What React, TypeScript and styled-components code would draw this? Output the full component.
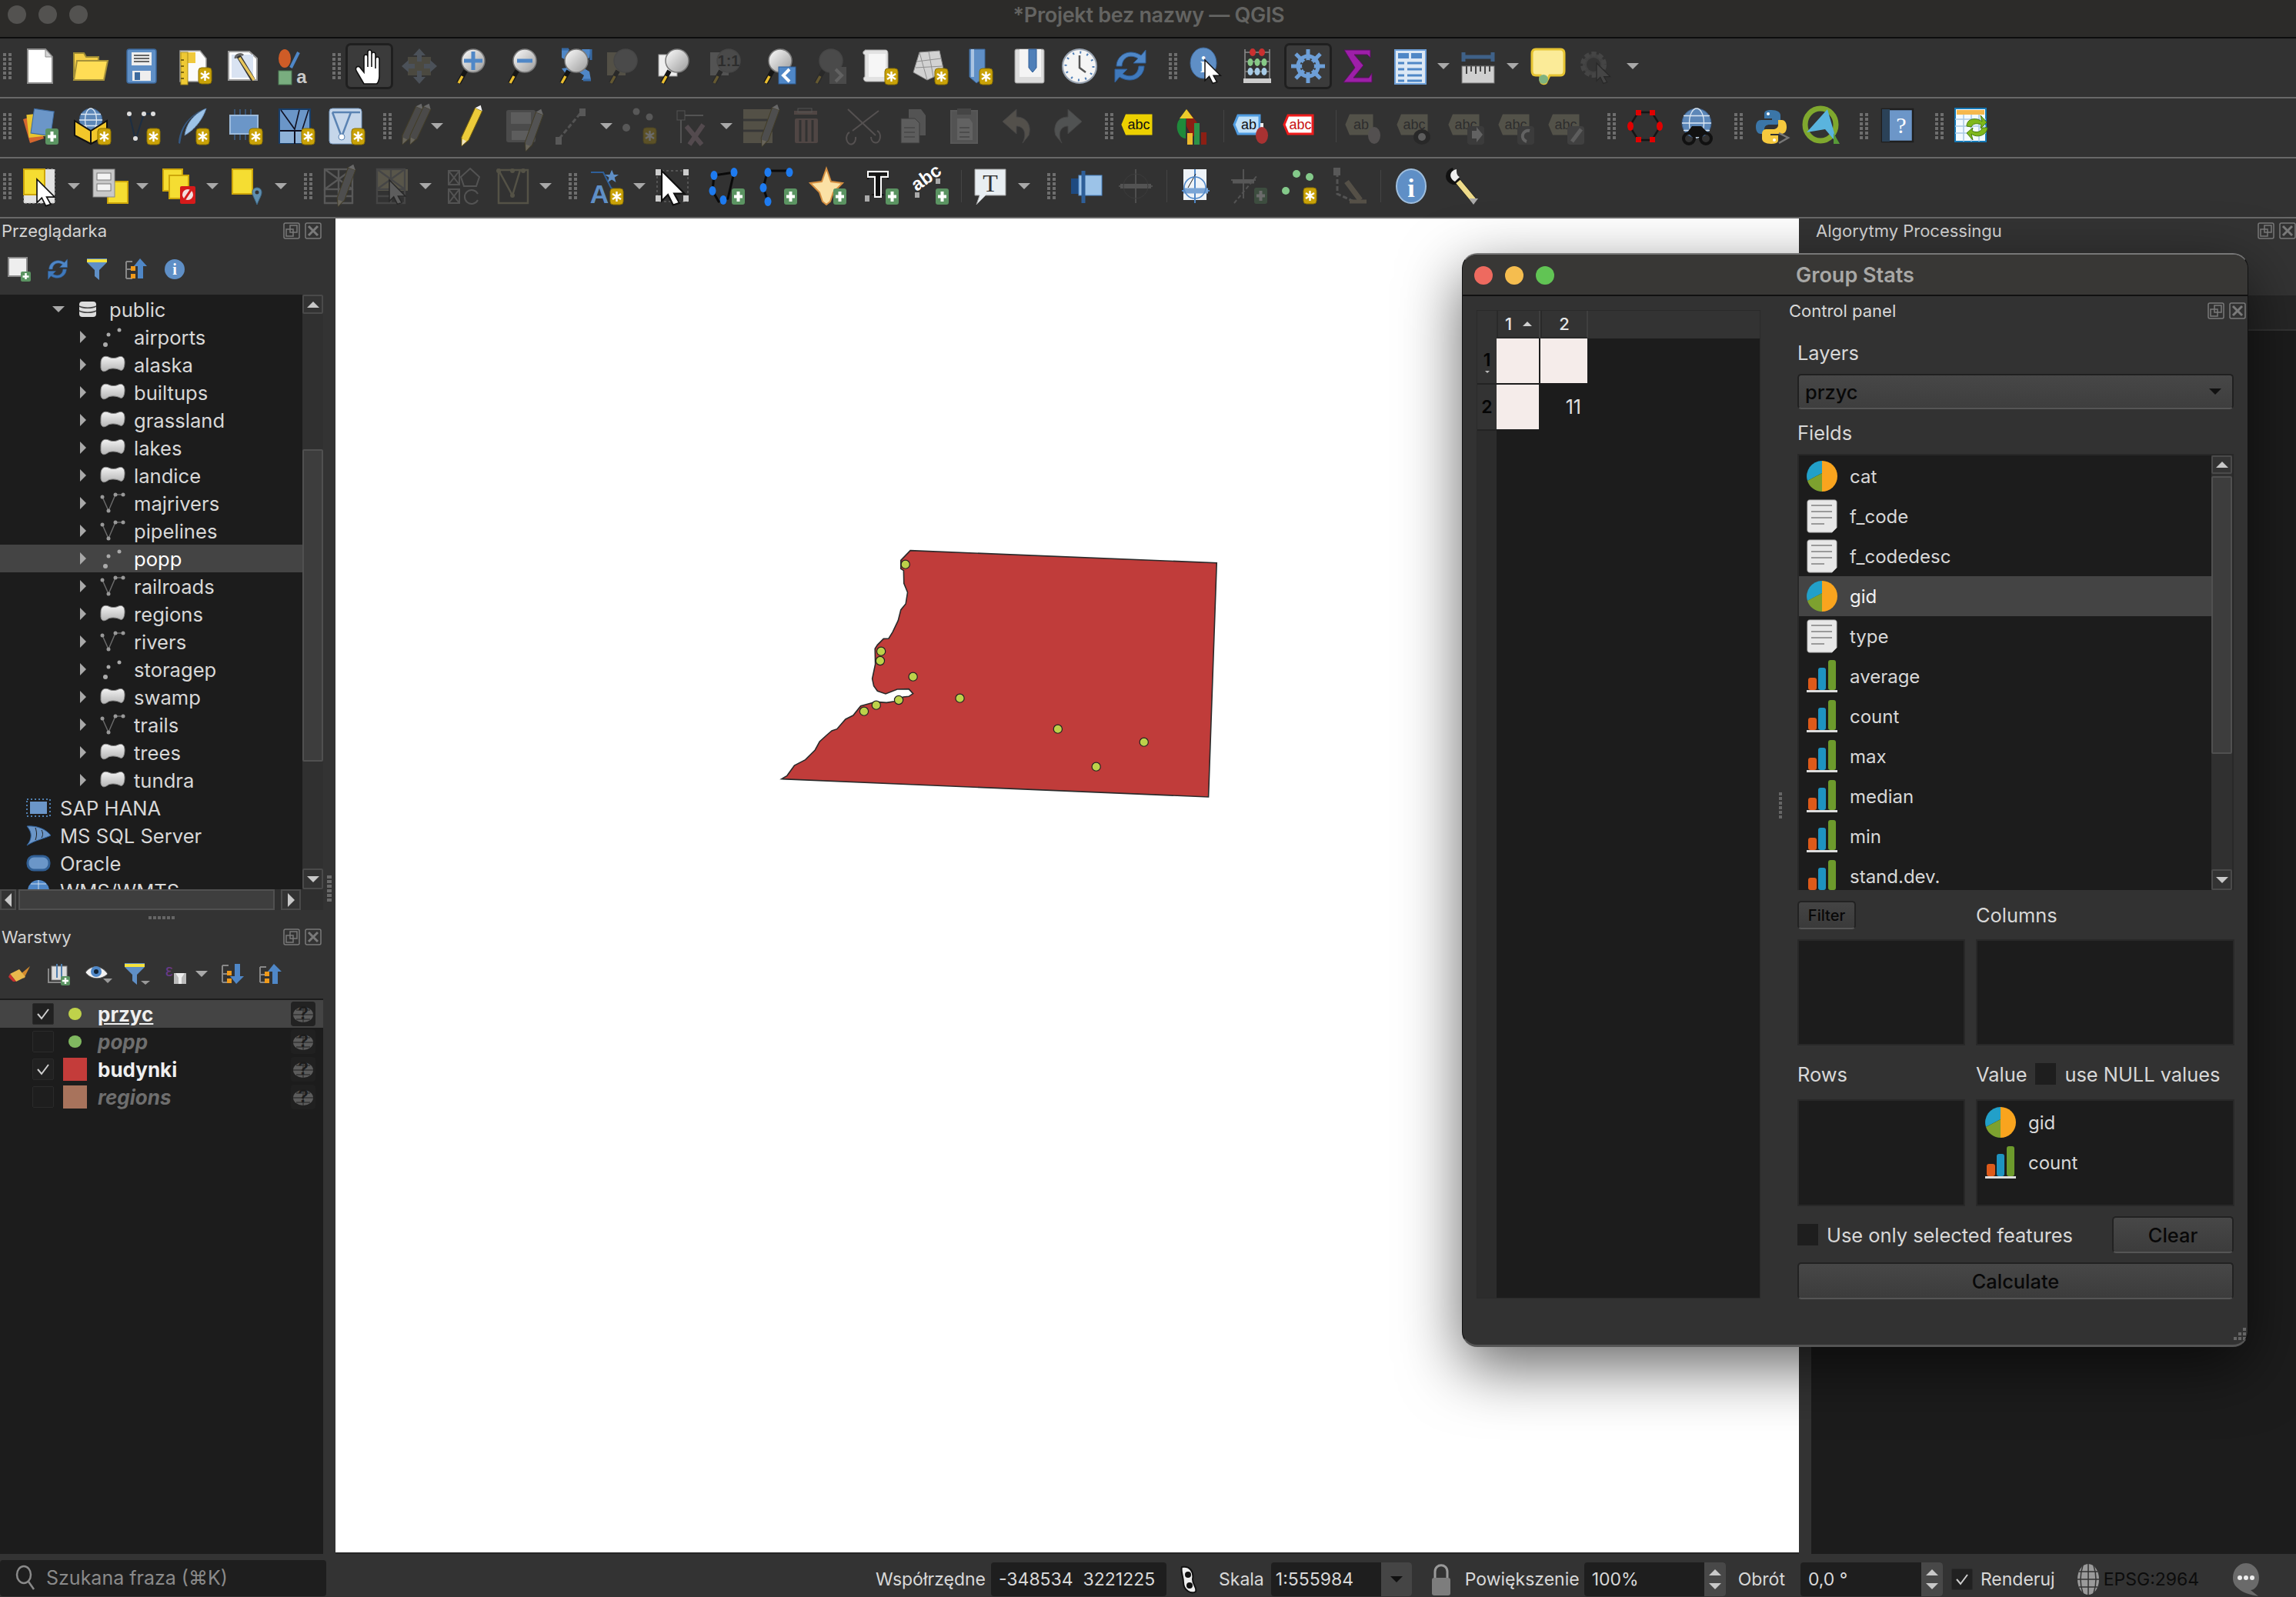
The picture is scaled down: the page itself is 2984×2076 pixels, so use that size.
import React, { ReactNode } from "react";
import styled, { createGlobalStyle } from "styled-components";

const GlobalStyle = createGlobalStyle`
  html, body { margin: 0; padding: 0; background: #333; }
  body { font-family: Inter, "Noto Sans", sans-serif; overflow: hidden; }
  * { box-sizing: border-box; }
`;

const Page = styled.div`
  position: relative;
  width: 2984px;
  height: 2076px;
  display: flex;
  flex-direction: column;
  background: #333;
  color: #d8d8d8;
  overflow: hidden;
`;

const TitleBar = styled.div`
  height: 50px;
  flex: none;
  display: grid;
  grid-template-columns: 1fr auto 1fr;
  align-items: center;
  padding: 0 8px 10px 10px;
  background: #2c2b29;
  border-bottom: 2px solid #0d0d0d;
`;
const Lights = styled.div`
  display: flex;
  gap: 16px;
`;
const Light = styled.span<{ $c: string }>`
  width: 24px;
  height: 24px;
  border-radius: 50%;
  background: ${(p) => p.$c};
`;
const WindowTitle = styled.div`
  font-size: 27px;
  font-weight: 600;
  color: #646462;
  letter-spacing: -0.3px;
`;

const Toolbar = styled.div`
  height: 78px;
  flex: none;
  display: flex;
  align-items: center;
  padding-bottom: 4px;
  background: #323232;
  border-bottom: 2px solid #686868;
`;
const Slot = styled.div<{ $ml: number; $w: number; $dim?: boolean; $active?: boolean }>`
  position: relative;
  flex: none;
  width: ${(p) => p.$w}px;
  height: 48px;
  margin-left: ${(p) => p.$ml}px;
  display: flex;
  align-items: center;
  justify-content: center;
  svg { opacity: ${(p) => (p.$dim ? 0.28 : 1)}; display: block; position: relative; overflow: visible; }
  ${(p) =>
    p.$active &&
    `&::before {
      content: "";
      position: absolute;
      inset: -6px -7px;
      background: #3b3b3b;
      border: 3px solid #1f1f1f;
      border-radius: 7px;
    }`}
`;
const Handle = styled.div`
  width: 11px;
  height: 34px;
  display: grid;
  grid-template-columns: 4px 4px;
  gap: 2px 3px;
  span { height: 4px; background: #6e6e6e; }
`;
const Sep = styled.div`
  width: 1px;
  height: 42px;
  background: #444;
`;
const Tri = styled.span<{ $dir?: "down" | "up" | "left" | "right"; $s?: number; $c?: string }>`
  display: block;
  flex: none;
  width: 0;
  height: 0;
  ${(p) => {
    const s = p.$s ?? 8;
    const c = p.$c ?? "#a9a9a9";
    const d = p.$dir ?? "down";
    if (d === "down") return `border-left:${s}px solid transparent;border-right:${s}px solid transparent;border-top:${s}px solid ${c};`;
    if (d === "up") return `border-left:${s}px solid transparent;border-right:${s}px solid transparent;border-bottom:${s}px solid ${c};`;
    if (d === "left") return `border-top:${s}px solid transparent;border-bottom:${s}px solid transparent;border-right:${s}px solid ${c};`;
    return `border-top:${s}px solid transparent;border-bottom:${s}px solid transparent;border-left:${s}px solid ${c};`;
  }}
`;

const Main = styled.div`
  flex: 1;
  min-height: 0;
  display: flex;
`;
const LeftDock = styled.div`
  width: 436px;
  flex: none;
  display: flex;
`;
const LeftPanels = styled.div`
  width: 420px;
  flex: none;
  display: flex;
  flex-direction: column;
`;
const SideSash = styled.div`
  width: 16px;
  height: 34px;
  margin-top: 854px;
  display: flex;
  flex-direction: column;
  align-items: center;
  gap: 2px;
  span { width: 6px; height: 4px; background: #6a6a6a; }
`;
const DockTitle = styled.div`
  height: 32px;
  flex: none;
  display: flex;
  align-items: center;
  justify-content: space-between;
  padding: 0 2px 0 2px;
  font-size: 22px;
  color: #d4d4d4;
`;
const DockBtns = styled.div`
  display: flex;
  gap: 6px;
  margin-right: 0;
`;
const DockBtn = styled.svg`
  display: block;
`;
const PanelBar = styled.div<{ $h: number }>`
  height: ${(p) => p.$h}px;
  flex: none;
  display: flex;
  align-items: center;
`;
const PanelIcon = styled.div<{ $ml: number }>`
  flex: none;
  margin-left: ${(p) => p.$ml}px;
  display: flex;
  align-items: center;
  svg { display: block; overflow: visible; }
`;
const TreeWrap = styled.div`
  height: 773px;
  flex: none;
  display: flex;
  background: #1c1c1c;
`;
const TreeView = styled.div`
  flex: 1;
  min-width: 0;
  padding-top: 1px;
  overflow: hidden;
`;
const TreeRow = styled.div<{ $pad: number; $sel?: boolean }>`
  height: 36px;
  display: flex;
  align-items: center;
  padding-left: ${(p) => p.$pad}px;
  background: ${(p) => (p.$sel ? "#444" : "transparent")};
  color: ${(p) => (p.$sel ? "#fff" : "#d8d8d8")};
  font-size: 25.6px;
  white-space: nowrap;
`;
const Twisty = styled.div`
  width: 16px;
  display: flex;
  justify-content: center;
  flex: none;
`;
const RowIcon = styled.div<{ $ml: number; $w: number }>`
  flex: none;
  width: ${(p) => p.$w}px;
  margin-left: ${(p) => p.$ml}px;
  display: flex;
  svg { display: block; overflow: visible; }
`;
const RowLabel = styled.span<{ $ml: number }>`
  margin-left: ${(p) => p.$ml}px;
`;

const VBar = styled.div<{ $w: number }>`
  width: ${(p) => p.$w}px;
  flex: none;
  display: flex;
  flex-direction: column;
  background: #303030;
`;
const ScrollBtn = styled.div<{ $h: number }>`
  height: ${(p) => p.$h}px;
  flex: none;
  display: flex;
  align-items: center;
  justify-content: center;
  background: #333;
  border: 2px solid #4a4a4a;
  border-radius: 2px;
`;
const VThumb = styled.div<{ $mt: number; $h: number }>`
  margin-top: ${(p) => p.$mt}px;
  height: ${(p) => p.$h}px;
  flex: none;
  background: #3d3d3d;
  border: 2px solid #505050;
  border-radius: 2px;
`;
const Grow = styled.div`
  flex: 1;
`;
const HBar = styled.div`
  height: 27px;
  flex: none;
  display: flex;
  align-items: stretch;
  background: #2f2f2f;
`;
const HBtn = styled.div<{ $w: number }>`
  width: ${(p) => p.$w}px;
  flex: none;
  display: flex;
  align-items: center;
  justify-content: center;
  background: #333;
  border: 2px solid #4a4a4a;
`;
const HThumb = styled.div`
  flex: none;
  width: 333px;
  margin: 0 8px 0 3px;
  background: #3e3e3e;
  border: 2px solid #505050;
`;
const Splitter = styled.div`
  height: 19px;
  flex: none;
  display: flex;
  justify-content: center;
  align-items: center;
  gap: 2px;
  span { width: 4px; height: 4px; background: #666; }
`;
const LayerTree = styled.div`
  flex: 1;
  min-height: 0;
  background: #1c1c1c;
  padding-top: 2px;
`;
const LayerRow = styled.div<{ $sel?: boolean }>`
  height: 36px;
  display: flex;
  align-items: center;
  padding: 0 10px 0 42px;
  background: ${(p) => (p.$sel ? "#444" : "transparent")};
`;
const Check = styled.div<{ $on?: boolean }>`
  width: 28px;
  height: 28px;
  flex: none;
  display: flex;
  align-items: center;
  justify-content: center;
  background: ${(p) => (p.$on ? "#212121" : "#1e1e1e")};
  border: 1px solid #2a2a2a;
  border-radius: 2px;
`;
const Symbol = styled.div`
  width: 32px;
  height: 32px;
  margin-left: 11px;
  flex: none;
  display: flex;
  align-items: center;
  justify-content: center;
`;
const Swatch = styled.span<{ $c: string }>`
  width: 31px;
  height: 30px;
  background: ${(p) => p.$c};
`;
const Marker = styled.span<{ $c: string }>`
  width: 17px;
  height: 16px;
  border-radius: 50%;
  background: ${(p) => p.$c};
`;
const LayerName = styled.span<{ $off?: boolean; $cur?: boolean }>`
  margin-left: 14px;
  font-size: 26px;
  font-weight: 700;
  font-style: ${(p) => (p.$off ? "italic" : "normal")};
  color: ${(p) => (p.$off ? "#6e6e6e" : "#efefef")};
  text-decoration: ${(p) => (p.$cur ? "underline" : "none")};
`;
const CrsBadge = styled.div<{ $sel?: boolean }>`
  margin-left: auto;
  width: 32px;
  height: 32px;
  display: flex;
  align-items: center;
  justify-content: center;
  background: ${(p) => (p.$sel ? "#222" : "#202020")};
  border-radius: 4px;
`;

const MapCanvas = styled.div`
  width: 1902px;
  flex: none;
  height: 1736px;
  background: #fff;
  border-bottom: 2px solid #262626;
  svg { display: block; }
`;

const RightDock = styled.div`
  flex: 1;
  min-width: 0;
  display: flex;
  flex-direction: column;
`;
const RightTitle = styled.div`
  height: 32px;
  flex: none;
  display: flex;
  align-items: center;
  justify-content: space-between;
  padding-left: 22px;
  font-size: 22px;
  color: #d4d4d4;
`;
const RightBar = styled.div`
  height: 68px;
  flex: none;
`;
const RightSearch = styled.div`
  height: 44px;
  flex: none;
  margin-left: 16px;
  background: #262626;
`;
const RightTree = styled.div`
  flex: 1;
  margin-left: 16px;
  margin-top: 2px;
  background: #1c1c1c;
`;

const StatusBar = styled.div`
  height: 56px;
  flex: none;
  display: flex;
  align-items: center;
  padding-top: 10px;
  background: #333;
  font-size: 23px;
  color: #d8d8d8;
  white-space: nowrap;
`;
const SearchBox = styled.div`
  width: 424px;
  height: 47px;
  flex: none;
  margin-top: -4px;
  display: flex;
  align-items: center;
  gap: 14px;
  padding-left: 20px;
  background: #1e1e1e;
  border-radius: 4px;
  color: #8a8a8a;
  font-size: 25px;
  svg { display: block; }
`;
const StatusLabel = styled.span<{ $ml: number }>`
  margin-left: ${(p) => p.$ml}px;
  flex: none;
`;
const StatusField = styled.div<{ $ml: number; $w: number; $pl?: number }>`
  width: ${(p) => p.$w}px;
  margin-left: ${(p) => p.$ml}px;
  height: 44px;
  flex: none;
  display: flex;
  align-items: center;
  justify-content: space-between;
  padding-left: ${(p) => p.$pl ?? 10}px;
  background: #1e1e1e;
  border-radius: 4px;
  overflow: hidden;
`;
const Spin = styled.div`
  width: 28px;
  height: 100%;
  flex: none;
  display: flex;
  flex-direction: column;
  align-items: center;
  justify-content: center;
  gap: 10px;
  background: #484848;
`;
const DropSide = styled.div`
  width: 40px;
  height: 100%;
  flex: none;
  display: flex;
  align-items: center;
  justify-content: center;
  background: #454545;
`;
const StatusIcon = styled.div<{ $ml: number }>`
  margin-left: ${(p) => p.$ml}px;
  flex: none;
  display: flex;
  svg { display: block; }
`;
const EpsgText = styled.span`
  margin-left: 5px;
  color: #0c0c0c;
  flex: none;
`;

const Dialog = styled.div`
  position: absolute;
  left: 1900px;
  top: 329px;
  width: 1022px;
  height: 1422px;
  display: flex;
  flex-direction: column;
  background: #323232;
  border: 1px solid #111;
  border-top: 2px solid #777;
  border-bottom: 3px solid #555;
  border-radius: 20px;
  box-shadow: 0 26px 80px rgba(0, 0, 0, 0.6);
  overflow: hidden;
`;
const DialogTitle = styled.div`
  position: relative;
  height: 54px;
  flex: none;
  display: flex;
  align-items: center;
  justify-content: center;
  background: #383735;
  border-bottom: 2px solid #111;
  font-size: 27px;
  font-weight: 600;
  color: #a8a8a6;
`;
const DialogLights = styled.div`
  position: absolute;
  left: 15px;
  top: 15px;
  display: flex;
  gap: 16px;
`;
const DialogBody = styled.div`
  position: relative;
  flex: 1;
  display: flex;
  min-height: 0;
`;
const ResultTable = styled.div`
  width: 369px;
  height: 1285px;
  margin: 18px 0 0 18px;
  flex: none;
  display: flex;
  flex-direction: column;
  background: #1c1c1c;
  border: 1px solid #2a2a2a;
`;
const TableHead = styled.div`
  height: 36px;
  flex: none;
  display: flex;
  background: #333;
  color: #e6e6e6;
  font-size: 22px;
  font-weight: 500;
`;
const Corner = styled.div`
  width: 25px;
  flex: none;
`;
const ColHead = styled.div<{ $w: number }>`
  width: ${(p) => p.$w}px;
  flex: none;
  display: flex;
  align-items: center;
  justify-content: center;
  gap: 14px;
  border-left: 2px solid #2a2a2a;
  border-right: 2px solid #3f3f3f;
  border-bottom: 2px solid #282828;
`;
const TableBody = styled.div`
  flex: 1;
  display: flex;
  min-height: 0;
`;
const RowHeads = styled.div`
  width: 25px;
  flex: none;
  background: #2c2c2c;
  color: #050505;
  font-size: 23px;
  font-weight: 600;
`;
const RowHead = styled.div`
  height: 60px;
  display: flex;
  flex-direction: column;
  align-items: center;
  justify-content: center;
  border-bottom: 2px solid #232323;
  background: #333;
`;
const CellGrid = styled.div`
  display: grid;
  grid-template-columns: 55px 61px;
  grid-auto-rows: 58px;
  gap: 2px;
  align-content: start;
`;
const Cell = styled.div<{ $pink?: boolean }>`
  display: flex;
  align-items: center;
  justify-content: flex-end;
  padding-right: 8px;
  font-size: 25px;
  color: #e0e0e0;
  background: ${(p) => (p.$pink ? "#f5ecea" : "#1c1c1c")};
`;
const Control = styled.div`
  flex: 1;
  min-width: 0;
  display: flex;
  flex-direction: column;
  padding: 0 18px 0 48px;
  font-size: 25.4px;
  color: #d8d8d8;
`;
const ControlHead = styled.div`
  height: 38px;
  margin: 0 -16px 0 -11px;
  flex: none;
  display: flex;
  align-items: center;
  justify-content: space-between;
  font-size: 22px;
  white-space: nowrap;
`;
const FieldLabel = styled.div<{ $mt: number }>`
  height: 34px;
  margin-top: ${(p) => p.$mt}px;
  flex: none;
  display: flex;
  align-items: center;
`;
const Combo = styled.div`
  height: 46px;
  margin-top: 11px;
  flex: none;
  display: flex;
  align-items: center;
  justify-content: space-between;
  padding: 0 14px 0 8px;
  background: linear-gradient(#474747, #3e3e3e);
  border: 2px solid #202020;
  border-bottom-color: #555;
  border-radius: 5px;
  color: #080808;
  font-weight: 500;
`;
const FieldList = styled.div`
  height: 567px;
  margin-top: 11px;
  flex: none;
  display: flex;
  background: #1c1c1c;
  border: 2px solid #282828;
  border-bottom: none;
`;
const ListView = styled.div`
  flex: 1;
  min-width: 0;
  padding-top: 1px;
  overflow: hidden;
`;
const ListRow = styled.div<{ $sel?: boolean }>`
  height: 52px;
  display: flex;
  align-items: center;
  gap: 15px;
  padding-left: 9px;
  background: ${(p) => (p.$sel ? "#444" : "transparent")};
  color: ${(p) => (p.$sel ? "#f2f2f2" : "#d8d8d8")};
  font-size: 24px;
  svg { display: block; flex: none; }
`;
const DropGrid = styled.div<{ $mt: number; $h: number }>`
  display: grid;
  grid-template-columns: 218px 336px;
  column-gap: 14px;
  margin-top: ${(p) => p.$mt}px;
  height: ${(p) => p.$h}px;
  flex: none;
  align-items: center;
`;
const DropBox = styled.div`
  height: 100%;
  padding-top: 2px;
  background: #1c1c1c;
  border: 2px solid #282828;
`;
const SmallBtn = styled.div`
  width: 76px;
  height: 37px;
  display: flex;
  align-items: center;
  justify-content: center;
  background: linear-gradient(#444, #3a3a3a);
  border: 2px solid #222;
  border-bottom-color: #555;
  border-radius: 5px;
  color: #080808;
  font-size: 20px;
  font-weight: 500;
`;
const InlineCheck = styled.div`
  display: flex;
  align-items: center;
  gap: 11px;
`;
const BoxCheck = styled.span`
  width: 27px;
  height: 28px;
  flex: none;
  background: #1e1e1e;
`;
const OptionRow = styled.div`
  height: 48px;
  margin-top: 13px;
  flex: none;
  display: flex;
  align-items: center;
  justify-content: space-between;
`;
const DarkBtn = styled.div<{ $w?: number; $mt?: number }>`
  width: ${(p) => (p.$w ? `${p.$w}px` : "auto")};
  height: 48px;
  margin-top: ${(p) => p.$mt ?? 0}px;
  flex: none;
  display: flex;
  align-items: center;
  justify-content: center;
  background: linear-gradient(#474747, #3c3c3c);
  border: 2px solid #222;
  border-bottom-color: #555;
  border-radius: 5px;
  color: #080808;
  font-weight: 500;
`;
const MidGrip = styled.div`
  position: absolute;
  left: 411px;
  top: 645px;
  display: flex;
  flex-direction: column;
  gap: 2px;
  span { width: 4px; height: 4px; background: #666; }
`;
const CornerGrip = styled.svg`
  position: absolute;
  right: 0;
  bottom: 0;
  display: block;
`;

// ---- icon parts
const T = ({ x, y, s, c, w, f, children }: { x: number; y: number; s: number; c: string; w?: number; f?: string; children: ReactNode }) => (
  <text x={x} y={y} fontSize={s} fill={c} fontWeight={w ?? 400} fontFamily={f ?? "Liberation Sans, sans-serif"} textAnchor="middle">
    {children}
  </text>
);
const Star = ({ x = 31, y = 27 }: { x?: number; y?: number }) => (
  <g transform={`translate(${x} ${y})`}>
    <rect width="17" height="21" rx="4" fill="#c9a208" stroke="#8b7100" />
    <path d="M8.5 4v13M3 7l11 7M14 7L3 14" stroke="#fff" strokeWidth="2.4" />
  </g>
);
const Plus = ({ x = 31, y = 27 }: { x?: number; y?: number }) => (
  <g transform={`translate(${x} ${y})`}>
    <rect width="17" height="21" rx="3" fill="#5b9462" />
    <path d="M8.5 4v13M3 10.5h11" stroke="#fff" strokeWidth="4" />
  </g>
);
const Lens = ({ children, dark }: { children?: ReactNode; dark?: boolean }) => (
  <>
    <path d="M8 46L17 30" stroke="#151515" strokeWidth="6" />
    <path d="M8 46L13 37" stroke="#e9bd2f" strokeWidth="3.5" />
    <circle cx="27" cy="17" r="15" fill={dark ? "#8a8a8a" : "url(#lens)"} stroke="#7a7a7a" strokeWidth="1.5" />
    {children}
  </>
);
const Cursor = ({ x = 0, y = 0, s = 1, c = "#fff" }: { x?: number; y?: number; s?: number; c?: string }) => (
  <path
    transform={`translate(${x} ${y}) scale(${s})`}
    d="M0 0L22 22H12L17 31L11 33L6 23L0 29Z"
    fill={c}
    stroke="#111"
    strokeWidth="1.6"
  />
);
const Table3 = ({ x = 0, y = 0, c = "#bbb" }: { x?: number; y?: number; c?: string }) => (
  <g transform={`translate(${x} ${y})`} fill="none" stroke={c} strokeWidth="2.4">
    <rect x="0" y="0" width="36" height="26" />
    <path d="M0 0L36 26M36 0L0 26M18 0v26" />
    <path d="M0 26v18h36V26M0 35h36M18 26v18" />
  </g>
);
const Pencil = ({ x = 0, y = 0, r = 25, c = "#eccb3a" }: { x?: number; y?: number; r?: number; c?: string }) => (
  <g transform={`translate(${x} ${y}) rotate(${r})`}>
    <path d="M-5 -24H5V18L0 28L-5 18Z" fill={c} stroke="#6d5a10" />
    <path d="M-5 -24L0 -30L5 -24Z" fill="#f4f4f4" />
    <path d="M-3 20L0 28L3 20Z" fill="#f2e5c0" />
  </g>
);
const Globe = ({ cx = 24, cy = 18, r = 16 }: { cx?: number; cy?: number; r?: number }) => (
  <g>
    <circle cx={cx} cy={cy} r={r} fill="#5c87b8" stroke="#3a5c86" />
    <ellipse cx={cx} cy={cy} rx={r / 2} ry={r} fill="none" stroke="#dbe7f3" strokeWidth="1.3" />
    <path d={`M${cx - r} ${cy}H${cx + r}M${cx - r + 2} ${cy - r / 2}H${cx + r - 2}M${cx - r + 2} ${cy + r / 2}H${cx + r - 2}`} stroke="#dbe7f3" strokeWidth="1.3" />
  </g>
);
const AbcTag = ({ fill, stroke, text, c, w = 30 }: { fill: string; stroke: string; text: string; c: string; w?: number }) => (
  <>
    <path d={`M6 10H${w + 8}V34H6L1 22Z`} fill={fill} stroke={stroke} strokeWidth="3" />
    <T x={w / 2 + 7} y={28} s={18} c={c}>{text}</T>
  </>
);

const icons: Record<string, ReactNode> = {
  newDoc: <><path d="M8 2H31L40 12V46H8Z" fill="#fff" stroke="#8d8d8d" strokeWidth="2" /><path d="M31 2V12H40Z" fill="#d5d5d5" stroke="#8d8d8d" /></>,
  folder: <><path d="M2 7H15L18 12H34V38H2Z" fill="#f4cf48" stroke="#9c8a35" strokeWidth="2" /><path d="M6 17H46L41 42H2Z" fill="#ffdd55" stroke="#a5913a" strokeWidth="2" /></>,
  save: <><rect x="5" y="2" width="38" height="44" rx="3" fill="#5f8fc6" stroke="#3c689c" strokeWidth="1.5" /><rect x="11" y="6" width="26" height="17" fill="#eee" /><path d="M14 10H34M14 14H34M14 18H34" stroke="#666" strokeWidth="2" /><rect x="12" y="30" width="24" height="13" fill="#eee" /><rect x="15" y="32" width="7" height="10" fill="#3d6a9e" /></>,
  saveAs: <><path d="M8 4H34L42 14V44H8Z" fill="#fbfbfb" stroke="#999" strokeWidth="1.5" /><rect x="8" y="6" width="20" height="14" fill="#f0c93c" /><rect x="9" y="6" width="9" height="42" fill="#efc934" stroke="#a78b1b" /><path d="M9 16h4M9 24h4M9 32h4M9 40h4" stroke="#7d6711" strokeWidth="2" /><Star x={32} y={26} /></>,
  projProps: <><path d="M5 5H32L42 14V42H5Z" fill="#fff" stroke="#9a9a9a" strokeWidth="2" /><rect x="9" y="9" width="28" height="30" fill="#d9e3f2" /><path d="M17 9L37 42" stroke="#333" strokeWidth="6" /><path d="M19 13L38 42" stroke="#e8c65b" strokeWidth="3.5" /><path d="M14 14c0-5 7-7 10-4" fill="none" stroke="#666" strokeWidth="3" /></>,
  style: <><ellipse cx="12" cy="14" rx="8" ry="12" fill="#cf5c27" /><path d="M30 6L20 26" stroke="#4f87c7" strokeWidth="4" /><rect x="4" y="30" width="17" height="18" fill="#79ad7f" stroke="#4d7a55" /><T x={34} y={46} s={24} c="#c9c9c9" w={700}>a</T></>,
  hand: <path d="M17 47L7 30C5 25 10 22 13 27L17 32V12C17 8 22 8 22 12V25V6C22 2 27 2 27 6V25V9C27 5 32 5 32 9V27V15C32 11 37 11 37 15V37C37 42 35 47 33 47Z" fill="#fff" stroke="#111" strokeWidth="1.6" />,
  panSel: <><rect x="9" y="12" width="30" height="24" fill="#8c8566" /><path d="M24 1l8 9h-5v8h-6v-8h-5zM24 47l8-9h-5v-8h-6v8h-5zM1 24l9-8v5h8v6h-8v5zM47 24l-9-8v5h-8v6h8v5z" fill="#8ea2bd" /></>,
  zoomIn: <Lens><path d="M27 5v24M15 17h24" stroke="#4f87c7" strokeWidth="5" /></Lens>,
  zoomOut: <Lens><path d="M17 17h20" stroke="#4f87c7" strokeWidth="5" /></Lens>,
  zoomFull: <><path d="M8 2h10l-3 6 6 4-6 5-7-4zM46 2H34l3 6-6 4 6 5 7-4zM46 42H34l3-6-6-4 6-5 7 4z M8 27l7-1 5 4-6 5z" fill="#4f87c7" /><path d="M8 2h9M46 2v14M46 42H36" stroke="#376aa5" strokeWidth="3" /><Lens /></>,
  zoomLayer: <><rect x="3" y="6" width="24" height="30" fill="#a8a07a" /><Lens dark /></>,
  zoomSel: <><rect x="3" y="9" width="24" height="28" fill="#eee" stroke="#999" /><Lens /></>,
  oneToOne: <><rect x="3" y="6" width="24" height="30" fill="#aaa" /><Lens dark><T x={27} y={24} s={20} c="#222" w={700}>1:1</T></Lens></>,
  zoomLast: <><Lens /><rect x="25" y="25" width="22" height="22" fill="#4f87c7" stroke="#2e5f99" /><path d="M39 28L31 36L39 44" stroke="#fff" strokeWidth="4" fill="none" /></>,
  zoomNext: <><Lens dark /><rect x="25" y="25" width="22" height="22" fill="#888" /><path d="M33 28L41 36L33 44" stroke="#ddd" strokeWidth="4" fill="none" /></>,
  newMap: <><path d="M6 4C3 4 3 9 6 9V38C3 38 4 44 8 44H36V8C36 3 34 3 32 3H6Z" fill="#e2e2e2" stroke="#aaa" /><rect x="11" y="8" width="22" height="30" fill="#f6f6f6" /><Star x={32} y={27} /></>,
  map3d: <><path d="M12 6L38 4L44 32L22 42L4 32Z" fill="#d2d2d2" stroke="#8b8b8b" /><path d="M12 6L22 42M24 5L30 38M8 18L40 14M7 26L42 24" stroke="#8f8f8f" /><Star x={32} y={27} /></>,
  newBook: <><path d="M12 2H32V38L21 46L12 38Z" fill="#5f8fc6" stroke="#3c689c" /><rect x="14" y="2" width="4" height="36" fill="#aac4e2" /><Star x={25} y={27} /></>,
  showBook: <><rect x="6" y="2" width="38" height="44" rx="2" fill="#dcdcdc" stroke="#999" /><rect x="12" y="2" width="28" height="36" fill="#f4f4f4" /><path d="M24 2H34V26L29 32L24 26Z" fill="#4f7fb8" stroke="#2e5f99" /></>,
  clock: <><circle cx="24" cy="24" r="22" fill="#f5f5f5" stroke="#9aa5b3" strokeWidth="2" /><circle cx="24" cy="24" r="18" fill="none" stroke="#4f7fb8" strokeWidth="3" strokeDasharray="2 7.4" /><path d="M24 10V26L32 32" stroke="#555" strokeWidth="2.5" fill="none" /></>,
  refresh: <><path d="M6 24C6 10 22 0 38 10L44 3V20H28L34 14C24 8 14 12 13 24Z" fill="#4f87c7" stroke="#2e5f99" /><path d="M42 24C42 38 26 48 10 38L4 45V28H20L14 34C24 40 34 36 35 24Z" fill="#3f79bc" stroke="#2e5f99" /></>,
  identify: <><ellipse cx="22" cy="20" rx="17" ry="20" fill="#5f8fc6" stroke="#3c689c" /><T x={22} y={32} s={30} c="#fff" w={700} f="Liberation Serif, serif">i</T><Cursor x={24} y={16} s={0.92} /></>,
  abacus: <><path d="M8 2V44M40 2V44" stroke="#777" strokeWidth="2" /><rect x="6" y="40" width="36" height="6" fill="#ccc" /><path d="M8 6H40M8 18H40M8 31H40" stroke="#888" strokeWidth="1.5" /><ellipse cx="18" cy="6" rx="4" ry="5" fill="#c93030" /><ellipse cx="30" cy="6" rx="4" ry="5" fill="#c93030" /><ellipse cx="15" cy="19" rx="3.5" ry="5" fill="#86c986" /><ellipse cx="24" cy="19" rx="3.5" ry="5" fill="#86c986" /><ellipse cx="33" cy="19" rx="3.5" ry="5" fill="#86c986" /><ellipse cx="15" cy="31" rx="3.5" ry="5" fill="#a7cbe6" /><ellipse cx="24" cy="31" rx="3.5" ry="5" fill="#a7cbe6" /><ellipse cx="33" cy="31" rx="3.5" ry="5" fill="#a7cbe6" /></>,
  gear: <><path d="M24 2V46M2 24H46M8 8L40 40M40 8L8 40" stroke="#6d9fd8" strokeWidth="5" /><circle cx="24" cy="24" r="8" fill="#3b3b3b" /><circle cx="24" cy="24" r="13" fill="none" stroke="#6d9fd8" strokeWidth="5" /></>,
  sigma: <path d="M6 3H40V13L36 9H19L31 23L18 39H38L42 33V45H5L20 26Z" fill="#9d1fa8" stroke="#59105f" />,
  table: <><rect x="5" y="3" width="40" height="44" fill="#dce8f5" stroke="#6d9fd8" strokeWidth="2" /><rect x="9" y="7" width="14" height="7" fill="#4f87c7" /><rect x="26" y="7" width="14" height="7" fill="#4f87c7" /><path d="M9 20h8M9 28h8M9 36h8M9 43h8M21 20h19M21 28h19M21 36h19M21 43h19" stroke="#4f87c7" strokeWidth="3" /></>,
  measure: <><path d="M4 6V18M42 6V18M4 12H42" stroke="#3f6188" strokeWidth="5" /><rect x="2" y="24" width="42" height="22" fill="#cfcfcf" stroke="#777" /><path d="M8 24v10M14 24v7M20 24v10M26 24v7M32 24v10M38 24v7" stroke="#444" strokeWidth="2" /></>,
  tip: <><path d="M8 2H40C43 2 45 4 45 8V30C45 34 43 36 40 36H26L22 44C22 48 14 48 14 42V36H8C5 36 3 34 3 30V8C3 4 5 2 8 2Z" fill="#fbeb98" stroke="#e6c432" strokeWidth="3" /><circle cx="18" cy="41" r="6" fill="#7fb37f" /></>,
  action: <><circle cx="20" cy="22" r="14" fill="#6a6a6a" stroke="#777" strokeWidth="6" strokeDasharray="6 3" /><circle cx="20" cy="22" r="9" fill="#3a3a3a" /><Cursor x={24} y={20} s={0.8} c="#777" /></>,
  layerMgr: <><path d="M3 15L20 10L30 40L12 46Z" fill="#d4672f" /><rect x="9" y="8" width="22" height="30" fill="#e9c52e" transform="rotate(-6 20 24)" /><rect x="15" y="3" width="26" height="32" fill="#6b96c8" stroke="#3c689c" transform="rotate(8 28 20)" /><Plus x={32} y={27} /></>,
  gpkg: <><Globe cx={24} cy={16} r={15} /><path d="M3 17L24 30L45 17V36L24 47L3 36Z" fill="#f2c72a" stroke="#111" strokeWidth="2" /><path d="M24 30V47" stroke="#111" strokeWidth="2" /><Star x={33} y={27} /></>,
  newLine: <><path d="M7 8L15 42L26 8H38" fill="none" stroke="#1d2e42" strokeWidth="2" /><circle cx="7" cy="8" r="3" fill="#ddd" /><circle cx="26" cy="8" r="3" fill="#ddd" /><circle cx="38" cy="8" r="3" fill="#ddd" /><circle cx="15" cy="40" r="3" fill="#ddd" /><Star x={30} y={27} /></>,
  quill: <><path d="M42 1C28 6 14 18 10 36L8 47L6 46C6 30 18 8 42 1Z" fill="#365a85" /><path d="M42 1C38 14 28 28 14 36C16 20 26 8 42 1Z" fill="#9dc3e8" stroke="#5c86b4" strokeDasharray="3 1" /><Star x={29} y={27} /></>,
  chip: <><path d="M12 2v40M19 2v40M26 2v40M33 2v40" stroke="#3b5f88" strokeWidth="1.5" /><rect x="6" y="10" width="36" height="24" fill="#6b96c8" stroke="#9dbbdc" strokeWidth="2" /><Star x={31} y={27} /></>,
  mesh: <><rect x="3" y="1" width="42" height="46" fill="#173e6a" /><rect x="5" y="3" width="38" height="26" fill="#6b96c8" /><path d="M6 3L24 28L30 3M34 28L42 3" stroke="#112" strokeWidth="1.6" fill="none" /><path d="M5 30H43M24 30V47M5 38H43" stroke="#112" strokeWidth="2" /><rect x="5" y="31" width="18" height="15" fill="#8fb2d8" /><rect x="25" y="31" width="12" height="15" fill="#8fb2d8" /><Star x={33} y={27} /></>,
  virtual: <><rect x="4" y="1" width="42" height="46" rx="4" fill="#c5d6ea" stroke="#7b9cc2" /><path d="M8 6L20 38L32 6M8 6H44" stroke="#5a83b3" strokeWidth="2.5" fill="none" /><circle cx="20" cy="38" r="4" fill="#fff" stroke="#5a83b3" /><Star x={33} y={27} /></>,
  pencils: <><Pencil x={14} y={22} c="#8c8a84" /><Pencil x={24} y={22} c="#8c8a84" /></>,
  pencil: <Pencil x={24} y={24} c="#eccb3a" />,
  saveEdits: <><rect x="3" y="3" width="38" height="42" rx="3" fill="#8b8b8b" /><rect x="9" y="6" width="26" height="15" fill="#ccc" /><rect x="10" y="30" width="22" height="12" fill="#ccc" /><Pencil x={38} y={30} r={20} c="#aaa" /></>,
  nodeLine: <><path d="M8 40L38 4" stroke="#aaa" strokeWidth="3" strokeDasharray="6 3" /><rect x="3" y="38" width="8" height="10" fill="#bbb" /><rect x="34" y="1" width="8" height="10" fill="#bbb" /></>,
  dots: <><circle cx="6" cy="26" r="5" fill="#bbb" /><circle cx="19" cy="5" r="4.5" fill="#bbb" /><circle cx="36" cy="12" r="4.5" fill="#bbb" /><Star x={28} y={26} /></>,
  hammer: <><rect x="2" y="4" width="10" height="12" fill="none" stroke="#aaa" /><path d="M12 10H36M7 16V46" stroke="#aaa" strokeWidth="2" /><path d="M18 48L36 22M14 24L34 48" stroke="#a89" strokeWidth="6" /></>,
  tablePen: <><rect x="2" y="2" width="38" height="44" fill="#a8a07a" /><path d="M2 16H40M2 30H40" stroke="#444" strokeWidth="3" /><Pencil x={36} y={24} r={20} c="#999" /></>,
  trash: <><rect x="2" y="4" width="30" height="5" fill="#a07a72" /><rect x="7" y="1" width="18" height="5" fill="none" stroke="#aaa" /><rect x="3" y="14" width="30" height="32" rx="2" fill="#a07a72" /><path d="M10 16V44M18 16V44M26 16V44" stroke="#333" strokeWidth="3" /></>,
  scissors: <path d="M4 2L40 36M44 4L10 30M6 32a6 8 0 1 0 8 6M42 30a6 8 0 1 1-8 8" fill="none" stroke="#b0a0a0" strokeWidth="2" />,
  copy: <><path d="M18 2H34L40 10V36H18Z" fill="#aaa" /><path d="M8 14H26L32 20V46H8Z" fill="#ccc" stroke="#555" /><path d="M12 26H26M12 32H26M12 38H26" stroke="#555" /></>,
  paste: <><rect x="6" y="4" width="34" height="42" fill="#aaa" stroke="#bbb" strokeWidth="2" /><rect x="14" y="1" width="18" height="8" fill="#777" /><path d="M14 14H30L34 20V42H14Z" fill="#ddd" /><path d="M17 26H30M17 32H30M17 38H30" stroke="#444" /></>,
  undo: <path d="M4 18L22 2V12C36 12 42 24 38 36L30 46C36 34 32 24 22 24V34Z" fill="#a89e8e" stroke="#777" transform="translate(2 0)" />,
  redo: <path d="M44 18L26 2V12C12 12 6 24 10 36L18 46C12 34 16 24 26 24V34Z" fill="#9fa5a5" stroke="#777" />,
  abcY: <AbcTag fill="#ecd000" stroke="#ecd000" text="abc" c="#111" />,
  pie: <><path d="M15 2L4 18C0 28 6 40 14 40V24Z" fill="#1f8a3b" /><path d="M15 2L28 18C32 26 28 36 22 38L15 24Z" fill="#8c1f14" /><path d="M15 2L6 14H24Z" fill="#eccb2a" /><rect x="16" y="33" width="7" height="15" fill="#ecb92c" /><rect x="25" y="20" width="7" height="28" fill="#2d9248" /><rect x="34" y="32" width="7" height="16" fill="#8c1f14" /></>,
  abBlue: <><AbcTag fill="#bfe0f9" stroke="#4f9be0" text="ab" c="#111" w={26} /><rect x="35" y="20" width="4" height="14" fill="#eee" /><ellipse cx="37" cy="36" rx="8" ry="11" fill="#a83232" /></>,
  abcR: <AbcTag fill="#fff" stroke="#ee1c1c" text="abc" c="#c81212" />,
  abDim: <><AbcTag fill="#aaa486" stroke="#aaa486" text="ab" c="#222" w={26} /><ellipse cx="37" cy="36" rx="8" ry="11" fill="#a89e9e" /></>,
  abcEye: <><AbcTag fill="#aaa486" stroke="#aaa486" text="abc" c="#222" /><ellipse cx="32" cy="38" rx="11" ry="10" fill="#111" /><circle cx="32" cy="38" r="5" fill="#ccc" /></>,
  abcArrow: <><AbcTag fill="#aaa486" stroke="#aaa486" text="abc" c="#222" /><rect x="24" y="24" width="22" height="24" rx="4" fill="#555" /><path d="M30 30H36V25L44 35L36 45V40H30Z" fill="#ddd" /></>,
  abcRot: <><AbcTag fill="#aaa486" stroke="#aaa486" text="abc" c="#222" /><rect x="24" y="24" width="22" height="24" rx="4" fill="#555" /><path d="M40 30a7 7 0 1 0 -4 14" fill="none" stroke="#ddd" strokeWidth="4" /></>,
  abcPen: <><AbcTag fill="#aaa486" stroke="#aaa486" text="abc" c="#222" /><rect x="24" y="24" width="22" height="24" rx="4" fill="#666" /><path d="M42 28L30 44" stroke="#ccc" strokeWidth="5" /></>,
  redHex: <><path d="M15 6H33L44 24L33 42H15L4 24Z" fill="none" stroke="#151515" strokeWidth="2.5" /><rect x="12" y="3" width="7" height="7" fill="#e00000" /><rect x="30" y="3" width="7" height="7" fill="#e00000" /><rect x="12" y="38" width="7" height="7" fill="#e00000" /><rect x="30" y="38" width="7" height="7" fill="#e00000" /><ellipse cx="5" cy="24" rx="4" ry="6" fill="#e00000" /><ellipse cx="43" cy="24" rx="4" ry="6" fill="#e00000" /></>,
  globeBino: <><Globe cx={24} cy={20} r={19} /><circle cx="14" cy="40" r="7" fill="none" stroke="#111" strokeWidth="4" /><circle cx="36" cy="40" r="7" fill="none" stroke="#111" strokeWidth="4" /><path d="M12 32L18 24H30L38 32L30 38H18Z" fill="#111" /></>,
  python: <><path d="M24 3C14 3 15 7 15 10V14H25V16H11C6 16 4 20 4 25C4 31 7 34 10 34H15V28C15 24 18 22 22 22H31C34 22 36 19 36 16V10C36 6 32 3 24 3Z" fill="#3b76a8" /><circle cx="20" cy="8" r="2" fill="#fff" /><path d="M24 47C34 47 33 43 33 40V36H23V34H37C42 34 44 30 44 25C44 19 41 16 38 16H33V22C33 26 30 28 26 28H17C14 28 12 31 12 34V40C12 44 16 47 24 47Z" fill="#f5c93e" /><circle cx="28" cy="42" r="2" fill="#fff" /><path d="M34 33L46 39L34 46" fill="none" stroke="#777" strokeWidth="2.5" /></>,
  qgis: <><ellipse cx="23" cy="22" rx="20" ry="21" fill="none" stroke="#7fa82e" strokeWidth="7" /><path d="M32 2L5 32L29 28L45 47Z" fill="#5ab4de" /><path d="M40 33L48 47H40Z" fill="#589a38" /></>,
  help: <><rect x="5" y="2" width="40" height="42" fill="#6c96c8" stroke="#1f1f1f" strokeWidth="2.5" /><rect x="5" y="2" width="10" height="42" fill="#2b4258" /><T x={30} y={33} s={30} c="#fff" f="Liberation Serif, serif">?</T></>,
  tableSync: <><rect x="3" y="1" width="40" height="43" fill="#f3fafe" stroke="#1578b5" strokeWidth="2" /><rect x="5" y="3" width="36" height="6" fill="#f5b84d" /><path d="M3 15H43M3 24H43M3 33H43M14 9V44M24 9V44M34 9V44" stroke="#a9c9e3" strokeWidth="1.5" /><path d="M18 24C18 14 30 12 38 18L36 10L44 19L36 27L37 22C32 20 26 20 24 25Z" fill="#7fb81c" stroke="#467c0e" /><path d="M45 26C44 36 32 40 24 34L26 42L18 33L26 26L25 30C30 33 37 32 38 26Z" fill="#7fb81c" stroke="#467c0e" /></>,
  selRect: <><rect x="4" y="2" width="40" height="44" fill="#e2e2e2" stroke="#bbb" strokeDasharray="3 2" /><rect x="4" y="2" width="27" height="33" fill="#f5dd32" stroke="#cda60a" strokeWidth="2" /><Cursor x={21} y={15} s={1.05} /></>,
  attrSel: <><rect x="21" y="18" width="26" height="28" fill="#f5dd32" stroke="#cda60a" strokeWidth="2" /><rect x="2" y="2" width="28" height="36" fill="#c8c8c8" stroke="#8a8a8a" /><rect x="7" y="7" width="18" height="9" fill="#f3f3f3" stroke="#777" /><rect x="7" y="21" width="18" height="9" fill="#f3f3f3" stroke="#777" /></>,
  desel: <><rect x="3" y="2" width="25" height="28" fill="#f5dd32" stroke="#cda60a" strokeWidth="2" /><rect x="11" y="10" width="25" height="30" fill="#f5dd32" stroke="#cda60a" strokeWidth="2" /><rect x="25" y="24" width="20" height="23" rx="2" fill="#d61a1a" /><circle cx="35" cy="35" r="7" fill="#f3dede" /><path d="M31 41L39 29" stroke="#d61a1a" strokeWidth="3" /></>,
  selPin: <><rect x="4" y="2" width="26" height="32" fill="#f5dd32" stroke="#cda60a" strokeWidth="2" /><path d="M36 48C32 38 30 36 30 32C30 24 42 24 42 32C42 36 40 38 36 48Z" fill="#5f8fb0" stroke="#3e6a8a" /><circle cx="36" cy="32" r="2.5" fill="#333" /></>,
  dimEdit: <><Table3 x={3} y={2} /><Pencil x={30} y={24} r={20} c="#999" /></>,
  dimSel: <><rect x="4" y="2" width="40" height="28" fill="#bdb488" /><Table3 x={4} y={2} c="#777" /><Cursor x={20} y={16} s={0.95} c="#ccc" /></>,
  dimShapes: <><rect x="4" y="4" width="14" height="18" fill="none" stroke="#aaa" strokeWidth="2" /><path d="M4 4L18 22M18 4L4 22M32 1L44 12L40 24H24L20 12Z" fill="none" stroke="#aaa" strokeWidth="2" /><rect x="4" y="28" width="14" height="18" fill="none" stroke="#aaa" strokeWidth="2" /><path d="M4 28L18 46M18 28L4 46M42 34a9 9 0 1 0 0 8" fill="none" stroke="#aaa" strokeWidth="2" /></>,
  dimVert: <><path d="M6 3V46H44V3H6L24 36L34 3" fill="none" stroke="#ada47c" strokeWidth="2.5" /><circle cx="6" cy="4" r="3" fill="#ada47c" /><circle cx="24" cy="4" r="3" fill="#ada47c" /><circle cx="38" cy="4" r="3" fill="#ada47c" /><circle cx="24" cy="36" r="3" fill="#ada47c" /></>,
  labelA: <><path d="M4 6H20L30 26L40 32" fill="none" stroke="#2e5f99" strokeWidth="2" /><path d="M39 2l3 7h7l-6 4 2 7-6-4-6 4 2-7-6-4h7z" fill="#5f8fc6" transform="translate(-4 1) scale(.9)" /><T x={15} y={46} s={34} c="#5f8fc6" w={700}>A</T><Star x={29} y={27} /></>,
  cursorDots: <><path d="M4 4H44V44H4Z" fill="none" stroke="#777" strokeDasharray="3 3" /><rect x="2" y="2" width="7" height="8" fill="#ccc" /><rect x="38" y="2" width="7" height="8" fill="#ccc" /><rect x="2" y="36" width="7" height="8" fill="#ccc" /><rect x="38" y="36" width="7" height="8" fill="#ccc" /><Cursor x={10} y={4} s={1.35} /></>,
  polyPlus: <><path d="M8 10L34 6L26 40L14 44L6 30Z" fill="none" stroke="#0a0a0a" strokeWidth="3" /><ellipse cx="8" cy="10" rx="4.5" ry="6" fill="#1e7bf0" /><ellipse cx="34" cy="6" rx="4.5" ry="6" fill="#1e7bf0" /><ellipse cx="6" cy="30" rx="4.5" ry="6" fill="#1e7bf0" /><ellipse cx="20" cy="42" rx="4.5" ry="6" fill="#1e7bf0" /><Plus x={31} y={27} /></>,
  polyPlus2: <><path d="M12 4L38 4M8 10L4 26L10 44" fill="none" stroke="#0a0a0a" strokeWidth="3" /><ellipse cx="10" cy="6" rx="4.5" ry="6" fill="#1e7bf0" /><ellipse cx="38" cy="6" rx="4.5" ry="6" fill="#1e7bf0" /><ellipse cx="4" cy="26" rx="4.5" ry="6" fill="#1e7bf0" /><ellipse cx="10" cy="44" rx="4.5" ry="6" fill="#1e7bf0" /><Plus x={31} y={27} /></>,
  starPlus: <><path d="M21 1L27 18L42 20L30 32L26 44L21 48L16 44L12 32L0 20L15 18Z" fill="#fbe1a5" stroke="#d58f41" strokeWidth="2" /><Plus x={30} y={27} /></>,
  tPlus: <><T x={20} y={36} s={44} c="#111" f="Liberation Serif, serif" w={700}>T</T><path d="M7 5H33V12H24V38H16V12H7Z" fill="none" stroke="#fff" strokeWidth="2" /><rect x="3" y="36" width="6" height="8" fill="#aaa" /><Plus x={30} y={27} /></>,
  abcPlus: <><g transform="rotate(-35 20 16)"><T x={20} y={20} s={24} c="#fff" w={700}>abc</T></g><rect x="3" y="32" width="6" height="7" fill="#aaa" /><rect x="30" y="14" width="6" height="7" fill="#aaa" /><Plus x={30} y={27} /></>,
  noteT: <><path d="M4 2H44V36H18L6 48L10 36H4Z" fill="#e8eef2" stroke="#999" /><T x={24} y={31} s={32} c="#333" f="Liberation Serif, serif">T</T></>,
  align: <><rect x="4" y="14" width="16" height="20" fill="#1e4a80" /><rect x="14" y="10" width="30" height="26" fill="#9cc3e8" stroke="#4f87c7" /><path d="M20 4V46" stroke="#2e5f99" strokeWidth="5" /></>,
  cross: <><path d="M24 2V46M2 24H46" stroke="#999" strokeWidth="2" /><path d="M4 24H44" stroke="#aaa" strokeWidth="6" /><circle cx="24" cy="24" r="16" fill="none" stroke="#555" /></>,
  crossBox: <><rect x="6" y="2" width="30" height="40" fill="#eef3f8" /><path d="M21 2V46M4 30H40" stroke="#4f87c7" strokeWidth="2" /><path d="M6 30H38" stroke="#7aa5d6" strokeWidth="7" /><path d="M12 26L22 8" stroke="#222" /><circle cx="21" cy="26" r="14" fill="none" stroke="#4f87c7" strokeWidth="1.5" /></>,
  crossDim: <><path d="M16 2V40M0 16H32" stroke="#aaa" strokeWidth="2" /><path d="M2 18H30" stroke="#bbb" strokeWidth="5" /><path d="M4 46L34 10" stroke="#aaa" strokeDasharray="5 3" strokeWidth="2" /><Plus x={30} y={26} /></>,
  dotsStar: <><circle cx="6" cy="30" r="5" fill="#84c98a" /><circle cx="20" cy="8" r="5" fill="#84c98a" /><circle cx="37" cy="12" r="5" fill="#84c98a" /><Star x={29} y={26} /></>,
  dimLine: <><path d="M8 6V34L30 44" stroke="#aaa" strokeWidth="3" strokeDasharray="6 3" fill="none" /><rect x="3" y="0" width="9" height="10" fill="#bbb" /><path d="M20 18L38 42" stroke="#b0a080" strokeWidth="7" /><path d="M24 44H46" stroke="#b0a080" strokeWidth="5" /></>,
  info: <><ellipse cx="24" cy="24" rx="19" ry="22" fill="#5f8fc6" stroke="#9fbedd" strokeWidth="2" /><T x={24} y={38} s={34} c="#fff" w={700} f="Liberation Serif, serif">i</T></>,
  wrench: <><path d="M14 4C6 6 6 16 14 18L20 18L40 42" fill="none" stroke="#111" strokeWidth="8" /><path d="M20 18L40 42" stroke="#eedb8a" strokeWidth="7" /><path d="M18 2C8 4 8 14 16 18L22 12C18 10 18 6 18 2Z" fill="#eee" /><path d="M34 40h12l-6 8z" fill="#aaa" /></>,
};

type Tool = [string, number, boolean?];

const HANDLE = "|";
const ARROW = "v";
const SEP = "s";

const row1: Tool[] = [
  [HANDLE, 9], ["newDoc", 52], ["folder", 118], ["save", 184], ["saveAs", 250], ["projProps", 316], ["style", 382], [HANDLE, 437],
  ["hand", 480], ["panSel", 545, true], ["zoomIn", 612], ["zoomOut", 679], ["zoomFull", 746], ["zoomLayer", 810, true], ["zoomSel", 877], ["oneToOne", 944, true],
  ["zoomLast", 1011], ["zoomNext", 1077, true], ["newMap", 1142], ["map3d", 1207], ["newBook", 1272], ["showBook", 1337], ["clock", 1403], ["refresh", 1469], [HANDLE, 1524],
  ["identify", 1566], ["abacus", 1634], ["gear", 1700], ["sigma", 1765], ["table", 1832], [ARROW, 1876], ["measure", 1922], [ARROW, 1966], ["tip", 2012], ["action", 2075, true], [ARROW, 2122],
];
const row2: Tool[] = [
  [HANDLE, 9], ["layerMgr", 51], ["gpkg", 118], ["newLine", 185], ["quill", 250], ["chip", 317], ["mesh", 383], ["virtual", 448], [HANDLE, 503],
  ["pencils", 545, true], [ARROW, 568], ["pencil", 612], ["saveEdits", 679, true], ["nodeLine", 743, true], [ARROW, 788], ["dots", 832, true], ["hammer", 902, true], [ARROW, 944], ["tablePen", 988, true],
  ["trash", 1054, true], ["scissors", 1122, true], ["copy", 1187, true], ["paste", 1254, true], ["undo", 1321, true], ["redo", 1386, true], [HANDLE, 1441],
  ["abcY", 1482], ["pie", 1551], [SEP, 1590], ["abBlue", 1627], ["abcR", 1692], [SEP, 1736], ["abDim", 1773, true], ["abcEye", 1840, true], ["abcArrow", 1907, true], ["abcRot", 1972, true], ["abcPen", 2037, true], [HANDLE, 2094],
  ["redHex", 2138], ["globeBino", 2205], [HANDLE, 2259], ["python", 2302], ["qgis", 2367], [HANDLE, 2422], ["help", 2465], [HANDLE, 2520], ["tableSync", 2562],
];
const row3: Tool[] = [
  [HANDLE, 9], ["selRect", 51], [ARROW, 96], ["attrSel", 143], [ARROW, 185], ["desel", 233], [ARROW, 276], ["selPin", 322], [ARROW, 365], [HANDLE, 400],
  ["dimEdit", 443, true], ["dimSel", 510, true], [ARROW, 553], ["dimShapes", 603, true], ["dimVert", 666, true], [ARROW, 709], [HANDLE, 744],
  ["labelA", 788], [ARROW, 831], ["cursorDots", 874], ["polyPlus", 944], ["polyPlus2", 1012], ["starPlus", 1077], ["tPlus", 1145], ["abcPlus", 1210], [SEP, 1249], ["noteT", 1287], [ARROW, 1331], [HANDLE, 1366],
  ["align", 1412], ["cross", 1476, true], [SEP, 1516], ["crossBox", 1556], ["crossDim", 1624, true], ["dotsStar", 1689], ["dimLine", 1754, true], [SEP, 1794], ["info", 1834], ["wrench", 1899],
];

const ACTIVE = new Set(["hand", "gear"]);
const widthOf = (n: string) => (n === HANDLE ? 11 : n === ARROW ? 16 : n === SEP ? 1 : 48);

function ToolRow({ tools }: { tools: Tool[] }) {
  let right = 0;
  return (
    <Toolbar>
      {tools.map(([name, center, dim], i) => {
        const w = widthOf(name);
        const ml = center - w / 2 - right;
        right = center + w / 2;
        return (
          <Slot key={i} $w={w} $ml={ml} $dim={dim} $active={ACTIVE.has(name)}>
            {name === HANDLE ? (
              <Handle>
                {Array.from({ length: 12 }, (_, k) => (
                  <span key={k} />
                ))}
              </Handle>
            ) : name === ARROW ? (
              <Tri />
            ) : name === SEP ? (
              <Sep />
            ) : (
              <svg width="48" height="48" viewBox="0 0 48 48">
                {icons[name]}
              </svg>
            )}
          </Slot>
        );
      })}
    </Toolbar>
  );
}

const FloatClose = () => (
  <DockBtns>
    <DockBtn width="22" height="22" viewBox="0 0 22 22" fill="none" stroke="#7a7a7a" strokeWidth="1.5">
      <rect x="1" y="1" width="20" height="20" rx="2" />
      <rect x="9" y="4" width="9" height="9" />
      <rect x="4" y="9" width="9" height="9" />
    </DockBtn>
    <DockBtn width="22" height="22" viewBox="0 0 22 22" fill="none" stroke="#7a7a7a" strokeWidth="1.5">
      <rect x="1" y="1" width="20" height="20" rx="2" />
      <path d="M5 5L17 17M17 5L5 17" strokeWidth="3" />
    </DockBtn>
  </DockBtns>
);

// small icons for the tree
const Blob = () => (
  <svg width="32" height="24" viewBox="0 0 32 24">
    <path d="M1 10C1 2 6 0 11 2C15 4 20 4 24 2C29 0 32 3 32 9C32 15 30 21 26 19C22 17 16 16 11 18C6 22 2 22 1 16Z" fill="url(#blob)" stroke="#888" />
  </svg>
);
const Pts = () => (
  <svg width="32" height="28" viewBox="0 0 32 28" fill="#aaa">
    <circle cx="7" cy="24" r="3" />
    <circle cx="11" cy="11" r="2.5" />
    <circle cx="25" cy="5" r="2.5" />
  </svg>
);
const Line = () => (
  <svg width="32" height="28" viewBox="0 0 32 28">
    <path d="M3 6L11 24L20 3H30" fill="none" stroke="#6a6a6a" strokeWidth="1.5" />
    <g fill="#999">
      <circle cx="3" cy="6" r="2.5" />
      <circle cx="11" cy="24" r="2.5" />
      <circle cx="20" cy="3" r="2.5" />
      <circle cx="30" cy="3" r="2.5" />
    </g>
  </svg>
);
const Db = () => (
  <svg width="24" height="24" viewBox="0 0 24 24">
    <rect x="1" y="2" width="22" height="20" rx="4" fill="#ddd" />
    <path d="M1 8C6 11 18 11 23 8M1 14C6 17 18 17 23 14" stroke="#444" strokeWidth="1.5" fill="none" />
  </svg>
);
const Hana = () => (
  <svg width="32" height="24" viewBox="0 0 32 24">
    <rect x="1" y="1" width="30" height="22" fill="none" stroke="#4f7fb0" strokeWidth="2" strokeDasharray="2 3" />
    <rect x="5" y="4" width="22" height="16" fill="#6b96c8" />
  </svg>
);
const Mssql = () => (
  <svg width="32" height="28" viewBox="0 0 32 28">
    <path d="M1 2C14 1 26 6 32 14C24 18 12 20 1 27C8 18 8 10 1 2Z" fill="#6b96c8" stroke="#2e5f99" />
    <path d="M12 4C14 10 14 14 12 20M20 7C22 11 22 14 20 17" stroke="#1c1c1c" fill="none" />
  </svg>
);
const Oracle = () => (
  <svg width="32" height="22" viewBox="0 0 32 22">
    <rect x="2" y="2" width="28" height="18" rx="8" fill="#6b96c8" stroke="#315f94" strokeWidth="3" />
  </svg>
);
const WmsGlobe = () => (
  <svg width="32" height="28" viewBox="0 0 32 28">
    <circle cx="16" cy="14" r="14" fill="#4f87c7" />
    <path d="M2 14H30M16 0V28M6 5H26" stroke="#cde" />
  </svg>
);

const treeIcon: Record<string, ReactNode> = { b: <Blob />, p: <Pts />, l: <Line /> };
const tableRows: [string, string][] = [
  ["airports", "p"], ["alaska", "b"], ["builtups", "b"], ["grassland", "b"], ["lakes", "b"], ["landice", "b"], ["majrivers", "l"], ["pipelines", "l"],
  ["popp", "p"], ["railroads", "l"], ["regions", "b"], ["rivers", "l"], ["storagep", "p"], ["swamp", "b"], ["trails", "l"], ["trees", "b"], ["tundra", "b"],
];
const providers: [string, ReactNode][] = [["SAP HANA", <Hana />], ["MS SQL Server", <Mssql />], ["Oracle", <Oracle />], ["WMS/WMTS", <WmsGlobe />]];

const browserBar: [ReactNode, number][] = [
  [<svg width="32" height="32" viewBox="0 0 32 32"><rect x="1" y="1" width="24" height="24" fill="#eee" stroke="#8a8a8a" strokeWidth="2" /><rect x="17" y="19" width="13" height="13" rx="2" fill="#5b9462" /><path d="M23.5 21v8M19.5 25.5h8" stroke="#fff" strokeWidth="2.5" /></svg>, 10],
  [<svg width="30" height="30" viewBox="0 0 48 48">{icons.refresh}</svg>, 18],
  [<svg width="28" height="30" viewBox="0 0 28 30"><path d="M1 1H27V6L17 16V29L11 24V16L1 6Z" fill="#5f8fc6" /><rect x="1" y="2" width="26" height="4" fill="#f5e23c" /></svg>, 22],
  [<svg width="30" height="28" viewBox="0 0 30 28"><path d="M2 4V26M2 4H10M2 14H10M2 26H10" stroke="#888" strokeWidth="2" fill="none" /><rect x="8" y="10" width="6" height="6" fill="#f09a1a" /><rect x="8" y="20" width="6" height="6" fill="#f09a1a" /><path d="M20 0L29 10H24V26H17V10H12Z" fill="#4f87c7" /></svg>, 22],
  [<svg width="26" height="26" viewBox="0 0 26 26"><circle cx="13" cy="13" r="13" fill="#5f8fc6" /><T x={13} y={20} s={20} c="#fff" w={700} f="Liberation Serif, serif">i</T></svg>, 22],
];
const layerBar: [ReactNode, number][] = [
  [<svg width="30" height="24" viewBox="0 0 30 24"><path d="M28 2L16 12L20 18Z" fill="#d28a2e" /><path d="M2 12L14 6L22 16L10 22Z" fill="#e8b84d" /><path d="M2 12L10 22L6 22L0 16Z" fill="#c83030" /></svg>, 11],
  [<svg width="30" height="30" viewBox="0 0 30 30"><path d="M2 8V26H22" fill="none" stroke="#888" strokeWidth="2" /><rect x="6" y="5" width="20" height="18" fill="#ddd" stroke="#888" /><path d="M13 2V20M19 2V20" stroke="#4f7fb0" strokeWidth="2" /><rect x="18" y="18" width="12" height="12" rx="2" fill="#5b9462" /><path d="M24 20v8M20 24h8" stroke="#fff" strokeWidth="2.5" /></svg>, 20],
  [<svg width="36" height="24" viewBox="0 0 36 24"><path d="M1 10C8 0 22 0 30 12C22 20 8 20 1 10Z" fill="#f2f2f2" stroke="#555" /><circle cx="15" cy="9" r="7" fill="#4f87c7" /><circle cx="15" cy="9" r="3" fill="#123" /><path d="M24 18h12l-6 6z" fill="#999" /></svg>, 19],
  [<svg width="34" height="30" viewBox="0 0 34 30"><path d="M1 1H27V6L17 16V29L11 24V16L1 6Z" fill="#5f8fc6" /><rect x="1" y="2" width="26" height="4" fill="#f5e23c" /><path d="M22 24h12l-6 5z" fill="#999" /></svg>, 15],
  [<svg width="30" height="30" viewBox="0 0 30 30"><T x={8} y={18} s={22} c="#6a3a8a">ε</T><rect x="14" y="14" width="16" height="14" fill="#bbb" /><path d="M16 14H28L24 20V28H20V20Z" fill="#eee" /></svg>, 17],
  [<Tri $s={8} />, 12],
  [<svg width="32" height="26" viewBox="0 0 32 26"><path d="M2 2V24M2 2H10M2 13H10M2 24H10" stroke="#888" strokeWidth="2" fill="none" /><rect x="8" y="9" width="6" height="6" fill="#f09a1a" /><rect x="8" y="19" width="6" height="6" fill="#f09a1a" /><path d="M20 26L30 16H25V0H18V16H12Z" fill="#4f87c7" /></svg>, 17],
  [<svg width="32" height="26" viewBox="0 0 32 26"><path d="M2 4V24M2 4H10M2 14H10M2 24H10" stroke="#888" strokeWidth="2" fill="none" /><rect x="8" y="10" width="6" height="6" fill="#f09a1a" /><rect x="8" y="19" width="6" height="6" fill="#f09a1a" /><path d="M20 0L30 10H25V26H18V10H12Z" fill="#4f87c7" /></svg>, 17],
];

const CrsMark = () => (
  <svg width="28" height="26" viewBox="0 0 28 26" fill="none">
    <ellipse cx="14" cy="14" rx="13" ry="10" fill="#5c5c5c" />
    <path d="M1 14H27M14 4V24M5 8H23M5 20H23" stroke="#333" strokeWidth="1.4" />
    <text x="14" y="20" fontSize="23" fontWeight="700" fill="#1d1d1d" textAnchor="middle" fontFamily="Liberation Sans, sans-serif">?</text>
  </svg>
);
const Tick = () => (
  <svg width="18" height="16" viewBox="0 0 18 16" fill="none">
    <path d="M2 8L7 14L16 2" stroke="#cfcfcf" strokeWidth="2" />
  </svg>
);

// field type icons
const PieIcon = () => (
  <svg width="42" height="42" viewBox="0 0 42 42">
    <path d="M21 1A20 20 0 0 1 21 41Z" fill="#f9a41e" />
    <path d="M21 1A20 20 0 0 0 2 27L21 17Z" fill="#22a0c9" />
    <path d="M2 27A20 20 0 0 0 21 41V17Z" fill="#7da12f" />
  </svg>
);
const TextIcon = () => (
  <svg width="42" height="44" viewBox="0 0 42 44">
    <path d="M5 1H37C39 1 40 2 40 4V37L34 43H5C3 43 2 42 2 40V4C2 2 3 1 5 1Z" fill="#e8e8e8" stroke="#bbb" />
    <path d="M7 8H34M7 16H34M7 24H34M7 32H24" stroke="#9a9a9a" strokeWidth="2" />
  </svg>
);
const BarsIcon = () => (
  <svg width="42" height="44" viewBox="0 0 42 44">
    <rect x="3" y="24" width="11" height="16" rx="3" fill="#dd5a1a" />
    <rect x="16" y="11" width="10" height="29" rx="3" fill="#1e93c0" />
    <rect x="29" y="1" width="10" height="39" rx="3" fill="#6d9a2c" />
    <rect x="1" y="40" width="40" height="3" fill="#ddd" />
  </svg>
);

const fields: [string, string, boolean?][] = [
  ["cat", "pie"], ["f_code", "text"], ["f_codedesc", "text"], ["gid", "pie", true], ["type", "text"], ["average", "bars"], ["count", "bars"], ["max", "bars"], ["median", "bars"], ["min", "bars"], ["stand.dev.", "bars"],
];
const fieldIcon: Record<string, ReactNode> = { pie: <PieIcon />, text: <TextIcon />, bars: <BarsIcon /> };

// map geometry, measured from the reference in a 2.529 x 3 crop
const outline = [
  [463,77],[1470,125],[1443,1038],[40,968],[58,955],[82,915],[118,893],[150,855],[165,822],[190,795],[205,780],[222,773],[250,735],[275,720],[300,683],[350,667],[385,670],[410,665],[440,648],[458,646],[472,635],[458,617],[420,618],[382,636],[355,625],[343,605],[338,577],[348,520],[347,460],[355,445],[375,421],[392,420],[405,395],[423,350],[432,308],[448,285],[454,240],[442,205],[441,155],[432,148],[432,115],
];
const sites = [[447,131],[367,470],[364,507],[472,569],[626,653],[425,660],[351,680],[311,704],[948,773],[1231,824],[1074,920]];
const mx = (x: number) => 1000 + x / 2.529;
const my = (y: number) => 690 + y / 3;

export default function App() {
  const statusIconGlobe = (
    <svg width="30" height="44" viewBox="0 0 30 44" fill="none">
      <ellipse cx="15" cy="22" rx="14" ry="20" fill="#9a9a9a" />
      <path d="M1 22H29M15 2V42M3 12H27M3 32H27M8 4C4 16 4 28 8 40M22 4C26 16 26 28 22 40" stroke="#333" strokeWidth="1.5" />
    </svg>
  );
  return (
    <Page>
      <GlobalStyle />
      <svg width="0" height="0" style={{ position: "absolute" }}>
        <defs>
          <linearGradient id="lens" x1="0" y1="0" x2="1" y2="1">
            <stop offset="0" stopColor="#fdfdfd" />
            <stop offset="1" stopColor="#9a9a9a" />
          </linearGradient>
          <linearGradient id="blob" x1="0" y1="0" x2="0" y2="1">
            <stop offset="0" stopColor="#f2f2f2" />
            <stop offset="1" stopColor="#b5b5b5" />
          </linearGradient>
        </defs>
      </svg>

      <TitleBar>
        <Lights>
          <Light $c="#535250" />
          <Light $c="#535250" />
          <Light $c="#535250" />
        </Lights>
        <WindowTitle>*Projekt bez nazwy — QGIS</WindowTitle>
      </TitleBar>

      <ToolRow tools={row1} />
      <ToolRow tools={row2} />
      <ToolRow tools={row3} />

      <Main>
        <LeftDock>
          <LeftPanels>
            <DockTitle>
              Przeglądarka
              <FloatClose />
            </DockTitle>
            <PanelBar $h={67}>
              {browserBar.map(([ic, ml], i) => (
                <PanelIcon key={i} $ml={ml}>{ic}</PanelIcon>
              ))}
            </PanelBar>
            <TreeWrap>
              <TreeView>
                <TreeRow $pad={68}>
                  <Twisty><Tri $s={8} /></Twisty>
                  <RowIcon $ml={18} $w={24}><Db /></RowIcon>
                  <RowLabel $ml={16}>public</RowLabel>
                </TreeRow>
                {tableRows.map(([name, kind]) => (
                  <TreeRow key={name} $pad={100} $sel={name === "popp"}>
                    <Twisty><Tri $dir="right" $s={8} /></Twisty>
                    <RowIcon $ml={14} $w={32}>{treeIcon[kind]}</RowIcon>
                    <RowLabel $ml={12}>{name}</RowLabel>
                  </TreeRow>
                ))}
                {providers.map(([name, ic]) => (
                  <TreeRow key={name} $pad={34}>
                    <RowIcon $ml={0} $w={32}>{ic}</RowIcon>
                    <RowLabel $ml={12}>{name}</RowLabel>
                  </TreeRow>
                ))}
              </TreeView>
              <VBar $w={27}>
                <ScrollBtn $h={25}><Tri $dir="up" $s={8} $c="#c8c8c8" /></ScrollBtn>
                <VThumb $mt={176} $h={406} />
                <Grow />
                <ScrollBtn $h={27}><Tri $s={8} $c="#c8c8c8" /></ScrollBtn>
              </VBar>
            </TreeWrap>
            <HBar>
              <HBtn $w={21}><Tri $dir="left" $s={9} $c="#c8c8c8" /></HBtn>
              <HThumb />
              <HBtn $w={26}><Tri $dir="right" $s={9} $c="#c8c8c8" /></HBtn>
            </HBar>
            <Splitter>
              {Array.from({ length: 6 }, (_, i) => <span key={i} />)}
            </Splitter>
            <DockTitle>
              Warstwy
              <FloatClose />
            </DockTitle>
            <PanelBar $h={64}>
              {layerBar.map(([ic, ml], i) => (
                <PanelIcon key={i} $ml={ml}>{ic}</PanelIcon>
              ))}
            </PanelBar>
            <LayerTree>
              <LayerRow $sel>
                <Check $on><Tick /></Check>
                <Symbol><Marker $c="#bfd24a" /></Symbol>
                <LayerName $cur>przyc</LayerName>
                <CrsBadge $sel><CrsMark /></CrsBadge>
              </LayerRow>
              <LayerRow>
                <Check />
                <Symbol><Marker $c="#80b860" /></Symbol>
                <LayerName $off>popp</LayerName>
                <CrsBadge><CrsMark /></CrsBadge>
              </LayerRow>
              <LayerRow>
                <Check $on><Tick /></Check>
                <Symbol><Swatch $c="#c43c3a" /></Symbol>
                <LayerName>budynki</LayerName>
                <CrsBadge><CrsMark /></CrsBadge>
              </LayerRow>
              <LayerRow>
                <Check />
                <Symbol><Swatch $c="#a8735c" /></Symbol>
                <LayerName $off>regions</LayerName>
                <CrsBadge><CrsMark /></CrsBadge>
              </LayerRow>
            </LayerTree>
          </LeftPanels>
          <SideSash>
            {Array.from({ length: 6 }, (_, i) => <span key={i} />)}
          </SideSash>
        </LeftDock>

        <MapCanvas>
          <svg width="1902" height="1734" viewBox="436 284 1902 1734">
            <polygon
              points={outline.map(([x, y]) => `${mx(x)},${my(y)}`).join(" ")}
              fill="#c03c3a"
              stroke="#2a2a2a"
              strokeWidth="1.6"
            />
            {sites.map(([x, y], i) => (
              <circle key={i} cx={mx(x)} cy={my(y)} r="5.6" fill="#bdd14a" stroke="#222" strokeWidth="1.2" />
            ))}
          </svg>
        </MapCanvas>

        <RightDock>
          <RightTitle>
            Algorytmy Processingu
            <FloatClose />
          </RightTitle>
          <RightBar />
          <RightSearch />
          <RightTree />
        </RightDock>
      </Main>

      <StatusBar>
        <SearchBox>
          <svg width="26" height="34" viewBox="0 0 26 34" fill="none" stroke="#8a8a8a" strokeWidth="2.5">
            <ellipse cx="11" cy="13" rx="9" ry="11" />
            <path d="M17 22L24 32" />
          </svg>
          Szukana fraza (⌘K)
        </SearchBox>
        <StatusLabel $ml={714}>Współrzędne</StatusLabel>
        <StatusField $ml={7} $w={228}>-348534&nbsp; 3221225</StatusField>
        <StatusIcon $ml={16}>
          <svg width="26" height="40" viewBox="0 0 26 40" fill="none">
            <path d="M4 4C14 2 20 10 18 20C18 28 24 30 22 36C16 40 6 34 6 24C6 16 2 10 4 4Z" fill="#eee" stroke="#111" strokeWidth="2" />
            <circle cx="12" cy="14" r="4" fill="#111" />
            <circle cx="14" cy="28" r="4" fill="#111" />
          </svg>
        </StatusIcon>
        <StatusLabel $ml={26}>Skala</StatusLabel>
        <StatusField $ml={9} $w={183} $pl={6}>1:555984<DropSide><Tri $s={8} $c="#111" /></DropSide></StatusField>
        <StatusIcon $ml={25}>
          <svg width="26" height="42" viewBox="0 0 26 42" fill="none">
            <path d="M5 20V11C5 0 21 0 21 11V20" stroke="#9a9a9a" strokeWidth="3" />
            <rect x="1" y="19" width="24" height="23" rx="3" fill="#7d7d7d" />
          </svg>
        </StatusIcon>
        <StatusLabel $ml={18}>Powiększenie</StatusLabel>
        <StatusField $ml={6} $w={184}>100%<Spin><Tri $dir="up" $s={8} $c="#c8c8c8" /><Tri $s={8} $c="#c8c8c8" /></Spin></StatusField>
        <StatusLabel $ml={16}>Obrót</StatusLabel>
        <StatusField $ml={20} $w={185}>0,0 °<Spin><Tri $dir="up" $s={8} $c="#c8c8c8" /><Tri $s={8} $c="#c8c8c8" /></Spin></StatusField>
        <StatusIcon $ml={11}><Check $on><Tick /></Check></StatusIcon>
        <StatusLabel $ml={10}>Renderuj</StatusLabel>
        <StatusIcon $ml={28}>{statusIconGlobe}</StatusIcon>
        <EpsgText>EPSG:2964</EpsgText>
        <StatusIcon $ml={43}>
          <svg width="36" height="44" viewBox="0 0 36 44">
            <path d="M18 1C28 1 35 10 35 20C35 30 29 36 24 36L34 44C24 42 14 40 8 34C3 30 1 26 1 20C1 10 8 1 18 1Z" fill="#6a6a6a" />
            <circle cx="10" cy="20" r="3" fill="#eee" />
            <circle cx="18" cy="20" r="3" fill="#eee" />
            <circle cx="26" cy="20" r="3" fill="#eee" />
          </svg>
        </StatusIcon>
      </StatusBar>

      <Dialog>
        <DialogTitle>
          <DialogLights>
            <Light $c="#ee6a5f" />
            <Light $c="#f5bd4f" />
            <Light $c="#61c454" />
          </DialogLights>
          Group Stats
        </DialogTitle>
        <DialogBody>
          <ResultTable>
            <TableHead>
              <Corner />
              <ColHead $w={57}>1<Tri $dir="up" $s={6} $c="#cfcfcf" /></ColHead>
              <ColHead $w={62}>2</ColHead>
            </TableHead>
            <TableBody>
              <RowHeads>
                <RowHead>1<Tri $s={3} $c="#bbb" /></RowHead>
                <RowHead>2</RowHead>
              </RowHeads>
              <CellGrid>
                <Cell $pink />
                <Cell $pink />
                <Cell $pink />
                <Cell>11</Cell>
              </CellGrid>
            </TableBody>
          </ResultTable>
          <MidGrip>
            {Array.from({ length: 6 }, (_, i) => <span key={i} />)}
          </MidGrip>
          <Control>
            <ControlHead>
              Control panel
              <FloatClose />
            </ControlHead>
            <FieldLabel $mt={18}>Layers</FieldLabel>
            <Combo>przyc<Tri $s={8} $c="#111" /></Combo>
            <FieldLabel $mt={13}>Fields</FieldLabel>
            <FieldList>
              <ListView>
                {fields.map(([name, kind, sel]) => (
                  <ListRow key={name} $sel={sel}>
                    {fieldIcon[kind]}
                    {name}
                  </ListRow>
                ))}
              </ListView>
              <VBar $w={27}>
                <ScrollBtn $h={24}><Tri $dir="up" $s={8} $c="#c8c8c8" /></ScrollBtn>
                <VThumb $mt={3} $h={361} />
                <Grow />
                <ScrollBtn $h={27}><Tri $s={8} $c="#c8c8c8" /></ScrollBtn>
              </VBar>
            </FieldList>
            <DropGrid $mt={14} $h={37}>
              <SmallBtn>Filter</SmallBtn>
              <span>Columns</span>
            </DropGrid>
            <DropGrid $mt={13} $h={138}>
              <DropBox />
              <DropBox />
            </DropGrid>
            <DropGrid $mt={20} $h={34}>
              <span>Rows</span>
              <InlineCheck>Value<BoxCheck />use NULL values</InlineCheck>
            </DropGrid>
            <DropGrid $mt={16} $h={139}>
              <DropBox />
              <DropBox>
                <ListRow><PieIcon />gid</ListRow>
                <ListRow><BarsIcon />count</ListRow>
              </DropBox>
            </DropGrid>
            <OptionRow>
              <InlineCheck><BoxCheck />Use only selected features</InlineCheck>
              <DarkBtn $w={158}>Clear</DarkBtn>
            </OptionRow>
            <DarkBtn $mt={12}>Calculate</DarkBtn>
          </Control>
          <CornerGrip width="26" height="26" viewBox="0 0 26 26" fill="#666">
            <rect x="20" y="4" width="4" height="4" />
            <rect x="14" y="10" width="4" height="4" />
            <rect x="20" y="10" width="4" height="4" />
            <rect x="8" y="16" width="4" height="4" />
            <rect x="14" y="16" width="4" height="4" />
            <rect x="20" y="16" width="4" height="4" />
          </CornerGrip>
        </DialogBody>
      </Dialog>
    </Page>
  );
}
